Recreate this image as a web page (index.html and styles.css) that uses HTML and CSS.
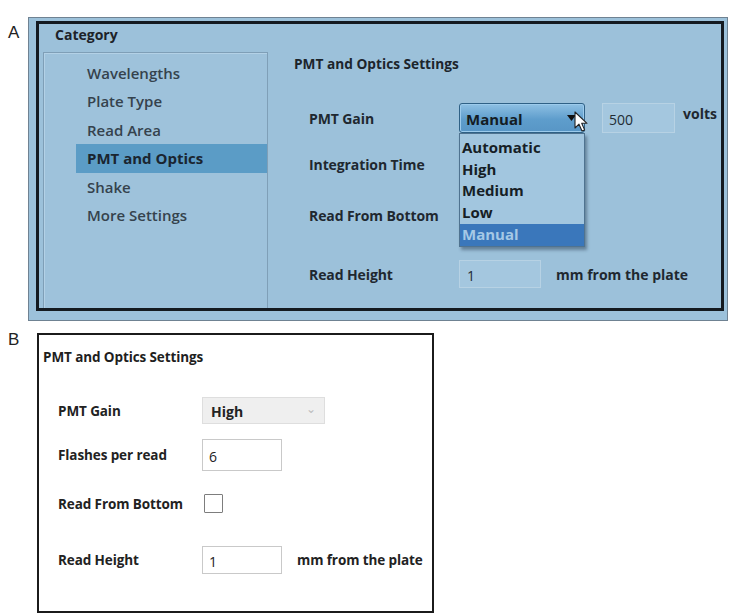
FILE: index.html
```html
<!DOCTYPE html>
<html>
<head>
<meta charset="utf-8">
<link rel="stylesheet" href="styles.css">
</head>
<body>
<div class="fig-row fig-a">
  <div class="fig-label label-a">A</div>
  <div class="panel-a">
    <div class="frame">
      <div class="cat-head">Category</div>
      <div class="cat-body">
        <ul class="cat-list">
          <li>Wavelengths</li>
          <li>Plate Type</li>
          <li>Read Area</li>
          <li class="active">PMT and Optics</li>
          <li>Shake</li>
          <li>More Settings</li>
        </ul>
        <div class="settings">
          <div class="set-title">PMT and Optics Settings</div>
          <div class="row row1">
            <div class="lbl">PMT Gain</div>
            <div class="ctl">
              <div class="sel-wrap">
                <div class="sel-open">
                  <span>Manual</span>
                  <svg class="tri" width="9" height="6" viewBox="0 0 9 6"><path d="M0 0 H9 L4.5 6 Z" fill="#111"/></svg>
                </div>
                <ul class="drop">
                  <li>Automatic</li>
                  <li>High</li>
                  <li>Medium</li>
                  <li>Low</li>
                  <li class="hl">Manual</li>
                </ul>
                <svg class="cursor" width="15" height="22" viewBox="0 0 15 22"><path d="M1 1 L1 17 L5 13.2 L8 20 L10.6 18.9 L7.7 12.3 L13 12.3 Z" fill="#fff" stroke="#222" stroke-width="1.1" stroke-linejoin="round"/></svg>
              </div>
              <div class="inp-a volts-inp">500</div>
              <div class="unit volts">volts</div>
            </div>
          </div>
          <div class="row row2"><div class="lbl">Integration Time</div></div>
          <div class="row row3"><div class="lbl">Read From Bottom</div></div>
          <div class="row row4">
            <div class="lbl">Read Height</div>
            <div class="ctl">
              <div class="inp-a height-inp">1</div>
              <div class="unit">mm from the plate</div>
            </div>
          </div>
        </div>
      </div>
    </div>
  </div>
</div>

<div class="fig-row fig-b">
  <div class="fig-label label-b">B</div>
  <div class="panel-b">
    <div class="b-title">PMT and Optics Settings</div>
    <div class="b-row b1">
      <div class="b-lbl">PMT Gain</div>
      <div class="b-sel"><span>High</span><span class="b-arrow">&#8964;</span></div>
    </div>
    <div class="b-row b2">
      <div class="b-lbl">Flashes per read</div>
      <div class="b-inp">6</div>
    </div>
    <div class="b-row b3">
      <div class="b-lbl">Read From Bottom</div>
      <div class="b-chk"></div>
    </div>
    <div class="b-row b4">
      <div class="b-lbl">Read Height</div>
      <div class="b-inp">1</div>
      <div class="b-unit">mm from the plate</div>
    </div>
  </div>
</div>
</body>
</html>
```

FILE: styles.css
```css
* { box-sizing: border-box; }
html, body { margin: 0; padding: 0; background: #fff; }
body {
  font-family: "Open Sans", "Noto Sans", "Liberation Sans", sans-serif;
  color: #1e2830;
  padding-top: 17px;
  width: 750px;
  height: 615px;
  overflow: hidden;
}
ul { list-style: none; margin: 0; padding: 0; }

.fig-row { display: flex; align-items: flex-start; }
.fig-label {
  font-family: "Liberation Sans", "Open Sans", sans-serif;
  font-weight: 300;
  font-size: 17px;
  color: #222;
  padding-left: 8px;
}
.label-a { width: 28px; padding-top: 6px; }
.label-b { width: 37px; padding-top: 0px; margin-top: -3px; }

/* ---------- Panel A ---------- */
.panel-a {
  width: 700px;
  height: 304px;
  border: 1px solid #6f8292;
  background: #9cc1da;
  padding: 3px 3px 9px 7px;
}
.frame {
  height: 100%;
  border: 3px solid #141a20;
  display: flex;
  flex-direction: column;
}
.cat-head {
  height: 28px;
  padding-left: 16px;
  font-weight: 700;
  font-size: 14px;
  line-height: 22px;
  color: #1d2329;
}
.cat-body { flex: 1; display: flex; }
.cat-list {
  flex: 0 0 225px;
  margin-left: 4px;
  border: 1px solid #7f9fb7;
  border-bottom: none;
  box-shadow: inset 1px 1px 0 #b3d1e6;
  background: #9ec2db;
  padding-top: 6px;
}
.cat-list li {
  height: 28.4px;
  line-height: 28.4px;
  margin-left: 32px;
  padding-left: 11px;
  font-size: 15px;
  font-weight: 600;
  color: #35424d;
}
.cat-list li.active {
  background: #5b9cc6;
  font-weight: 700;
  color: #1a2530;
}

.settings { flex: 1; padding-left: 26px; padding-top: 3px; }
.set-title {
  font-size: 13.7px;
  font-weight: 700;
  line-height: 18px;
  color: #1d252c;
}
.row { display: flex; align-items: center; padding-left: 15px; }
.row1 { margin-top: 30px; height: 30px; }
.row2 { margin-top: 16px; height: 30px; }
.row3 { margin-top: 21px; height: 30px; }
.row4 { margin-top: 30px; height: 28px; }
.lbl {
  width: 150px;
  font-size: 14px;
  font-weight: 700;
  color: #1f2830;
  letter-spacing: -0.1px;
}
.ctl { display: flex; align-items: center; height: 100%; }

.sel-wrap { position: relative; width: 126px; height: 30px; }
.sel-open {
  height: 30px;
  border: 1px solid #2f6186;
  border-radius: 3px;
  background: linear-gradient(#8ec0e3, #5e9dcc 55%, #5896c6);
  box-shadow: inset 0 0 0 1px #9ccbec;
  display: flex;
  align-items: center;
  justify-content: space-between;
  padding: 2px 8px 0 6px;
  font-size: 15px;
  font-weight: 700;
  color: #141c24;
}
.tri { margin-top: -2px; }
.drop {
  position: absolute;
  left: 0;
  top: 30px;
  width: 126px;
  background: #a2c6df;
  border: 1px solid #4f7390;
  box-shadow: 2px 3px 3px rgba(30, 50, 70, 0.45);
  padding-top: 3px;
  z-index: 2;
}
.drop li {
  height: 21.6px;
  line-height: 21.6px;
  padding-left: 2px;
  font-size: 15px;
  font-weight: 700;
  color: #161e26;
}
.drop li.hl {
  background: #3a77bb;
  color: #a5c9e6;
  margin-top: 1px;
}
.cursor { position: absolute; left: 115px; top: 8px; z-index: 3; }

.inp-a {
  background: #a4c7df;
  border: 1px solid #b7d2e4;
  font-size: 14px;
  color: #222c34;
  display: flex;
  align-items: center;
}
.volts-inp { width: 73px; height: 30px; margin-left: 17px; padding-left: 6px; padding-top: 2px; }
.height-inp { width: 82px; height: 28px; padding-left: 7px; padding-top: 3px; }
.unit {
  font-size: 14px;
  font-weight: 700;
  color: #1f2830;
  margin-left: 15px;
}
.volts { margin-left: 8px; align-self: flex-start; margin-top: 1px; }

/* ---------- Panel B ---------- */
.fig-b { margin-top: 12px; }
.panel-b {
  width: 397px;
  height: 280px;
  border: 2px solid #1b1b1b;
  background: #fff;
  padding: 13px 0 0 4px;
}
.b-title {
  font-size: 13.5px;
  font-weight: 700;
  line-height: 18px;
  color: #1e1e1e;
  letter-spacing: -0.1px;
}
.b-row { display: flex; align-items: center; padding-left: 15px; }
.b1 { margin-top: 31px; height: 27px; }
.b2 { margin-top: 15px; height: 32px; }
.b3 { margin-top: 23px; height: 19px; }
.b4 { margin-top: 33px; height: 28px; }
.b-lbl {
  width: 144px;
  font-size: 13.5px;
  font-weight: 700;
  color: #222;
  letter-spacing: -0.1px;
}
.b-sel {
  width: 123px;
  height: 27px;
  background: #efefef;
  border: 1px solid #dedede;
  display: flex;
  align-items: center;
  justify-content: space-between;
  padding: 2px 8px 0 8px;
  font-size: 14px;
  font-weight: 700;
  color: #222;
}
.b-arrow { color: #bdbdbd; font-size: 12px; font-weight: 400; margin-top: -6px; }
.b-inp {
  width: 80px;
  height: 100%;
  border: 1px solid #c9c9c9;
  font-size: 14px;
  color: #222;
  display: flex;
  align-items: center;
  padding-left: 6px;
  padding-top: 2px;
}
.b-chk {
  width: 19px;
  height: 19px;
  margin-left: 2px;
  border: 1.5px solid #7d7d7d;
  border-radius: 1px;
}
.b-unit {
  margin-left: 15px;
  font-size: 13.5px;
  font-weight: 700;
  color: #222;
  letter-spacing: -0.1px;
}
```
